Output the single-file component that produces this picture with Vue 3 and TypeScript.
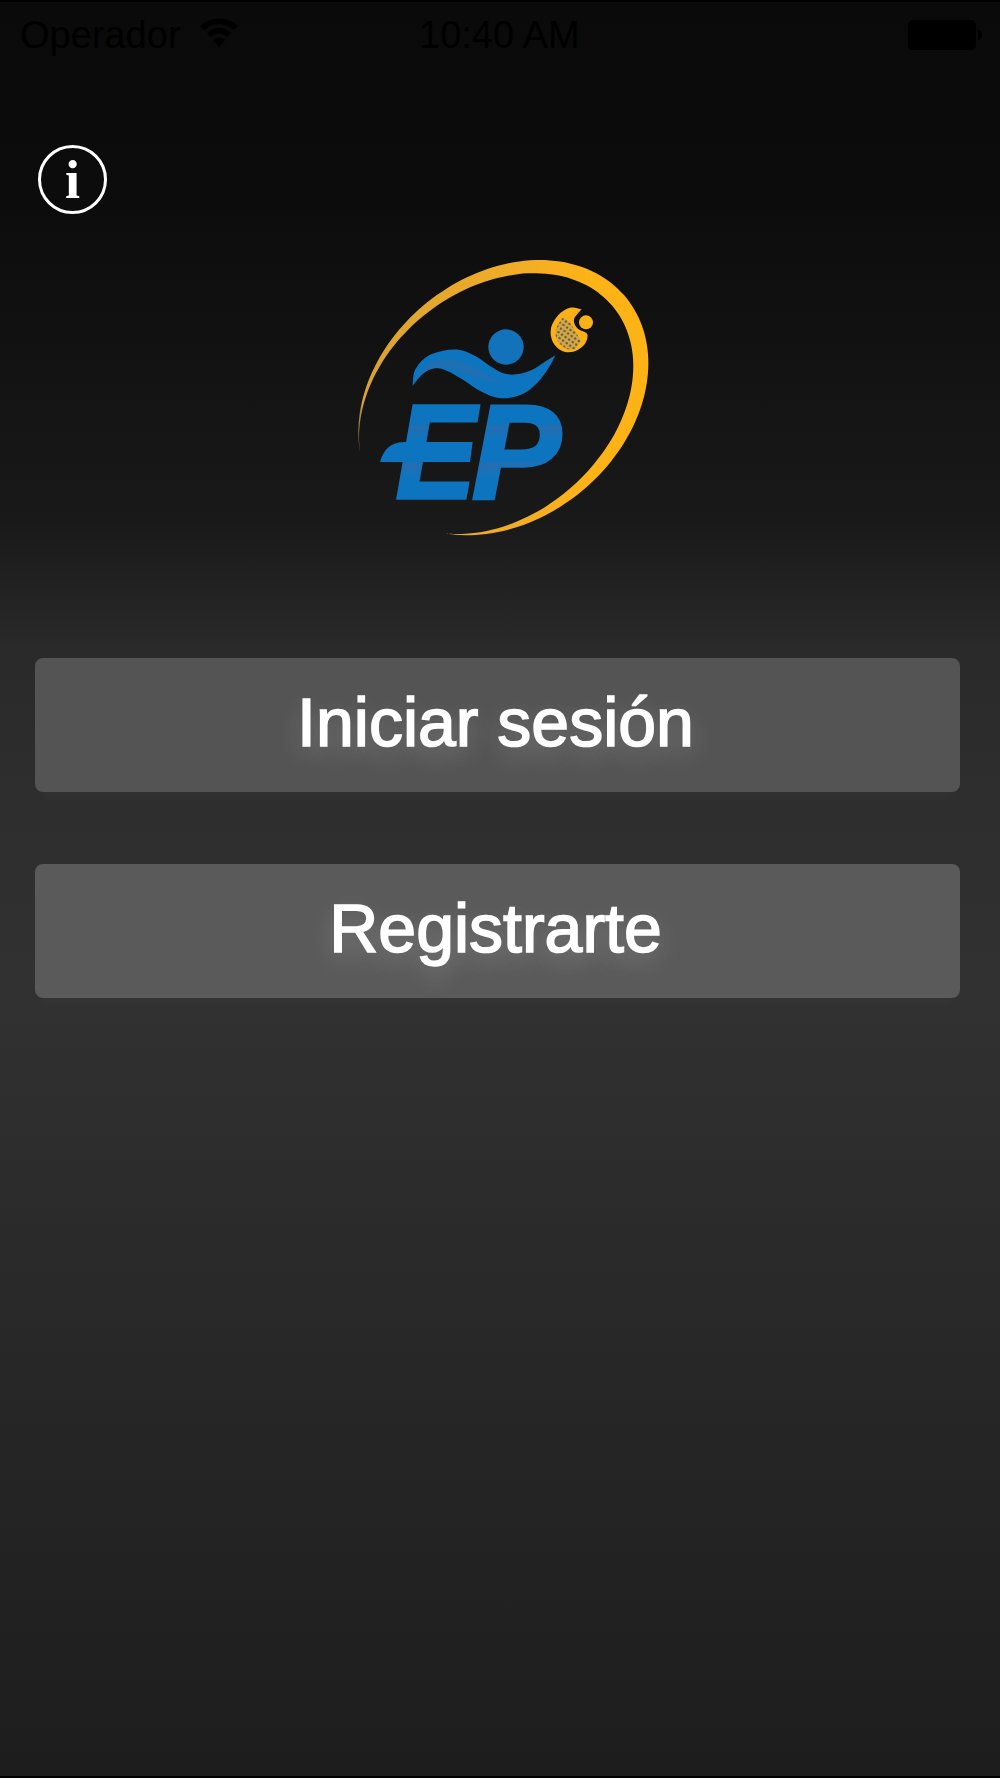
<template>
  <div class="screen">
    <header class="status-bar">
      <div class="status-left">
        <span class="carrier">Operador</span>
        <svg class="wifi" width="38" height="30" viewBox="0 0 38 30">
          <path d="M0 9 C11 -1 27 -1 38 9 L34 13 C25 5 13 5 4 13 Z" />
          <path d="M7 16 C14 9 24 9 31 16 L27 20 C22 15 16 15 11 20 Z" />
          <path d="M19 30 L13 23 C17 20 21 20 25 23 Z" />
        </svg>
      </div>
      <span class="clock">10:40 AM</span>
      <div class="battery">
        <span class="battery-body"></span>
        <span class="battery-cap"></span>
      </div>
    </header>

    <button class="info-btn" type="button">i</button>

    <svg class="logo" width="330" height="310" viewBox="0 0 990 930">
      <defs>
        <linearGradient id="ring" x1="0" y1="0" x2="1" y2="0">
          <stop offset="0" stop-color="#8f7846" />
          <stop offset="0.015" stop-color="#d8a232" />
          <stop offset="0.55" stop-color="#f2ad27" />
          <stop offset="0.8" stop-color="#fdb316" />
        </linearGradient>
        <linearGradient id="band" x1="0" y1="0" x2="0" y2="1">
          <stop offset="0" stop-color="#2a6cae" />
          <stop offset="1" stop-color="#0d75bf" />
        </linearGradient>
        <pattern id="mesh" width="13" height="13" patternUnits="userSpaceOnUse" patternTransform="rotate(35)">
          <rect width="13" height="13" fill="#d0a74e" />
          <circle cx="6.5" cy="6.5" r="3.5" fill="#5f4d25" />
        </pattern>
        <clipPath id="letters">
          <text class="logo-letters" transform="translate(167 774) scale(0.9 1)">E</text>
          <text class="logo-letters" transform="translate(395 774) scale(1 1)">P</text>
        </clipPath>
      </defs>

      <path fill="url(#ring)" :d="ringPath" />

      <path fill="#0d75bf" :d="swooshPath" />
      <path fill="#1f6fb3" d="M232 408 C258 368 300 352 345 360 C405 372 450 422 505 436 C430 425 370 392 320 384 C285 380 255 390 232 408 Z" />
      <circle cx="498" cy="321" r="53" fill="#1273bb" />

      <path fill="#fbb116" :d="racketPath" />
      <path fill="url(#mesh)" :d="meshPath" />
      <circle cx="738" cy="247" r="21" fill="#fbb116" />

      <path fill="#0d75bf" d="M120 666 C130 630 150 608 190 606 L398 606 L390 666 Z" />
      <text class="logo-letters" transform="translate(167 774) scale(0.9 1)">E</text>
      <text class="logo-letters" transform="translate(395 774) scale(1 1)">P</text>
      <g clip-path="url(#letters)">
        <rect x="150" y="556" width="520" height="44" fill="url(#band)" />
        <rect x="150" y="668" width="520" height="48" fill="url(#band)" />
      </g>
    </svg>

    <div class="actions">
      <button class="action first" type="button">Iniciar sesión</button>
      <button class="action second" type="button">Registrarte</button>
    </div>
  </div>
</template>

<script setup lang="ts">
type Pt = [number, number]

// catmull-rom through the points, starts from the current point
function curve(pts: Pt[]): string {
  let d = ''
  for (let i = 0; i < pts.length - 1; i++) {
    const a = pts[Math.max(i - 1, 0)]
    const b = pts[i]
    const c = pts[i + 1]
    const e = pts[Math.min(i + 2, pts.length - 1)]
    const c1x = b[0] + (c[0] - a[0]) / 6
    const c1y = b[1] + (c[1] - a[1]) / 6
    const c2x = c[0] - (e[0] - b[0]) / 6
    const c2y = c[1] - (e[1] - b[1]) / 6
    d += `C${c1x} ${c1y} ${c2x} ${c2y} ${c[0]} ${c[1]} `
  }
  return d
}

function shape(...parts: Pt[][]): string {
  const start = parts[0][0]
  return `M${start[0]} ${start[1]} ` + parts.map(curve).join('') + 'Z'
}

// tilted ellipse, thickest on the right and tapering to both tips
function buildRing(): string {
  const steps = 72
  const outer: Pt[] = []
  const inner: Pt[] = []
  for (let i = 0; i <= steps; i++) {
    const s = i / steps
    const t = 2.99 + (8.265 - 2.99) * s
    const dx = 435 * Math.cos(t)
    const dy = 413 * (-0.25 * Math.cos(t) + 0.968 * Math.sin(t))
    const k = 1 - (48 * Math.sin(Math.PI * Math.pow(s, 1.15))) / Math.hypot(dx, dy)
    outer.push([490 + dx, 473 + dy])
    inner.push([490 + dx * k, 473 + dy * k])
  }
  return shape(outer, inner.reverse())
}

const ringPath = buildRing()

const swooshPath = shape(
  [[218, 438], [225, 390], [260, 350], [310, 332], [360, 330], [410, 350], [450, 378], [490, 400], [530, 403], [575, 390], [615, 365], [647, 345]],
  [[647, 345], [625, 385], [595, 425], [555, 458], [505, 474], [460, 470], [415, 450], [370, 420], [320, 392], [280, 385], [245, 405], [218, 438]],
)

const racketPath = shape(
  [[725, 208], [690, 203], [655, 225], [633, 265], [638, 305], [665, 332], [700, 335], [730, 317], [742, 296]],
  [[742, 296], [740, 280], [712, 265], [702, 238], [725, 208]],
)

const meshPath = shape(
  [[668, 232], [648, 268], [651, 300], [675, 324], [703, 327], [724, 302]],
  [[724, 302], [708, 278], [690, 248], [668, 232]],
)
</script>

<style>
html,
body {
  margin: 0;
  background: #1c1c1c;
}
</style>

<style scoped>
.screen {
  width: 1000px;
  height: 1778px;
  box-sizing: border-box;
  display: flex;
  flex-direction: column;
  overflow: hidden;
  font-family: "Liberation Sans", Arial, sans-serif;
  border-top: 2px solid #000;
  border-bottom: 2px solid #000;
  background: linear-gradient(
    to bottom,
    #0a0a0a 0,
    #0c0c0c 200px,
    #191919 520px,
    #2a2a2a 650px,
    #2f2f2f 850px,
    #313131 1000px,
    #2a2a2a 1250px,
    #1d1d1d 1776px
  );
}

.status-bar {
  height: 66px;
  display: flex;
  align-items: center;
  justify-content: space-between;
  position: relative;
  padding: 0 18px 0 20px;
  color: #000;
  font-size: 38px;
  flex: none;
}

.status-left {
  display: flex;
  align-items: center;
  gap: 19px;
}

.wifi {
  fill: #000;
  margin-top: -6px;
}

.clock {
  position: absolute;
  left: 419px;
}

.battery {
  display: flex;
  align-items: center;
  gap: 2px;
}

.battery-body {
  width: 68px;
  height: 30px;
  background: #000;
  border-radius: 5px;
}

.battery-cap {
  width: 4px;
  height: 10px;
  background: #000;
  border-radius: 0 5px 5px 0;
}

.info-btn {
  width: 69px;
  height: 69px;
  margin: 77px 0 0 38px;
  padding: 0;
  flex: none;
  box-sizing: border-box;
  border: 3px solid #fff;
  border-radius: 50%;
  background: transparent;
  color: #fff;
  font-family: "Liberation Serif", serif;
  font-size: 54px;
  font-weight: 700;
  line-height: 60px;
}

.logo {
  flex: none;
  margin: 26px 0 0 340px;
}

.logo-letters {
  font-family: "Liberation Sans", Arial, sans-serif;
  font-size: 400px;
  font-weight: 700;
  font-style: italic;
  fill: #0d75bf;
  stroke: #0d75bf;
  stroke-width: 10px;
}

.actions {
  display: flex;
  flex-direction: column;
  gap: 72px;
  margin: 108px 40px 0 35px;
}

.action {
  height: 134px;
  border: 0;
  border-radius: 8px;
  color: #fff;
  font-family: inherit;
  font-size: 68px;
  padding: 0 4px 6px 0;
  -webkit-text-stroke: 1.6px #fff;
  text-shadow: 0 10px 24px rgba(255, 255, 255, 0.24);
  box-shadow: 0 14px 10px -6px rgba(255, 255, 255, 0.02);
}

.first {
  background: #545454;
}

.second {
  background: #5a5a5a;
}
</style>
